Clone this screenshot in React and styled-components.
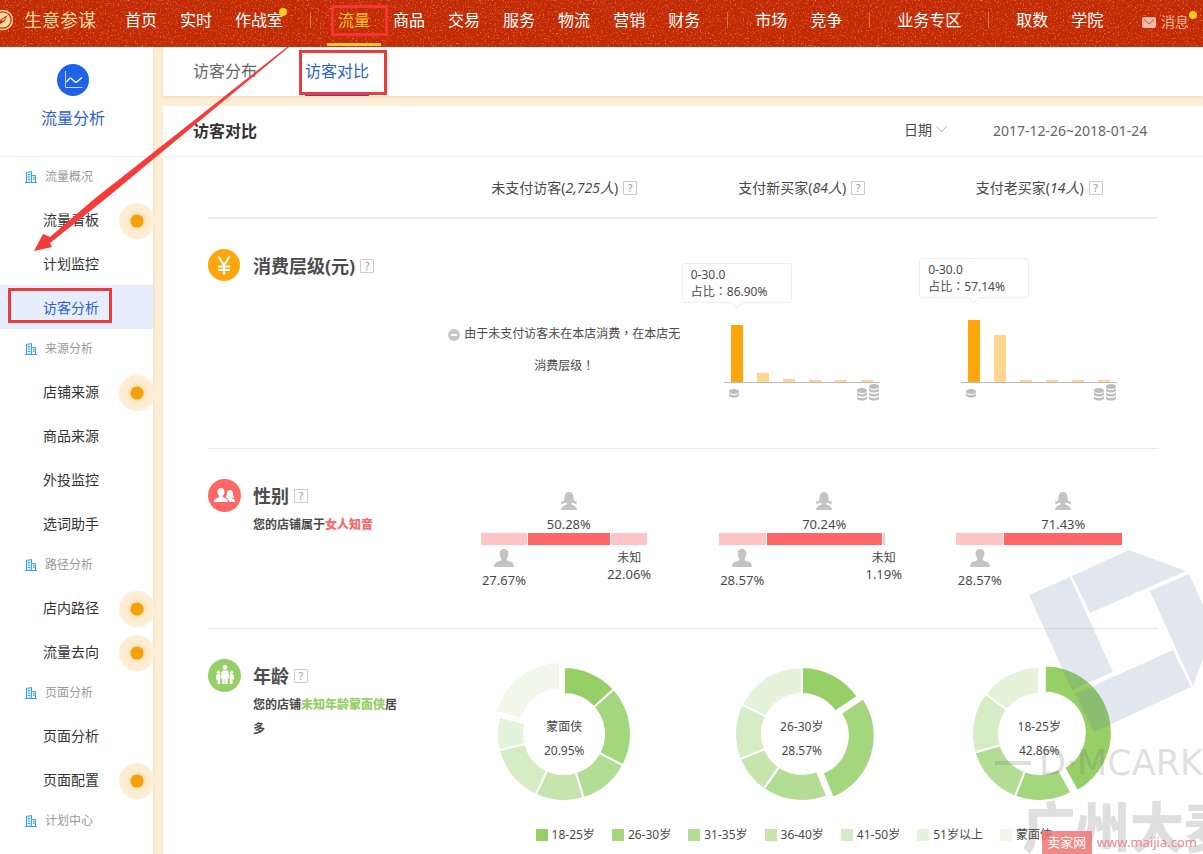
import React from 'react';
import styled, { createGlobalStyle, css } from 'styled-components';

const GlobalStyle = createGlobalStyle`
  *, *::before, *::after { box-sizing: border-box; }
  body {
    margin: 0;
    background: #fdeed7;
    color: #4a4a4a;
    font: 12px/18px "Noto Sans", "Noto Sans CJK SC", sans-serif;
  }
  h1, h2, h3, p, ul { margin: 0; padding: 0; font-weight: normal; }
  ul { list-style: none; }
  a { color: inherit; text-decoration: none; }
  button { font: inherit; color: inherit; border: 0; background: none; padding: 0; }
  svg { display: block; flex: none; }
`;

const Page = styled.div`
  position: relative;
  min-height: 100vh;
  overflow: hidden;
`;

/* ---------- top bar ---------- */

const TopBar = styled.header`
  position: relative;
  display: flex;
  align-items: flex-start;
  height: 47px;
  background: #c12a03;
  color: #fff;
  white-space: nowrap;
`;

const Grain = styled.svg`
  position: absolute;
  inset: 0;
  width: 100%;
  height: 100%;
`;

const Brand = styled.a`
  position: relative;
  display: flex;
  align-items: center;
  gap: 11px;
  width: 125px;
  height: 40px;
  flex: none;
  color: #fcd7a0;
  font-size: 18px;
`;

const MainNav = styled.nav`
  position: relative;
  display: flex;
  gap: 27px;
  flex: 1;
`;

const NavGroup = styled.div`
  display: flex;
  gap: 23px;

  & + & {
    padding-left: 28px;
    background: linear-gradient(#d9705a, #d9705a) 0 12px / 1px 16px no-repeat;
  }
`;

const NavLink = styled.a`
  position: relative;
  height: 47px;
  font-size: 16px;
  line-height: 40px;
  ${(p) => p.$active && css`
    color: #fbc02d;
    &::after {
      content: '';
      position: absolute;
      left: -11px;
      right: -11px;
      bottom: 1px;
      height: 3px;
      background: #f9c32f;
    }
  `}
`;

const Dot = styled.i`
  position: absolute;
  top: 8px;
  right: -4px;
  width: 8px;
  height: 8px;
  border-radius: 50%;
  background: #fccb20;
`;

const Messages = styled.a`
  position: relative;
  display: flex;
  align-items: center;
  gap: 5px;
  margin-right: 14px;
  padding-top: 2px;
  font-size: 14px;
  line-height: 40px;
  color: #f3b5a5;

  ${Dot} { top: 11px; right: -8px; }
`;

/* ---------- annotations ---------- */

const Mark = styled.span`
  position: absolute;
  border: 3px solid #ec3b3b;
  pointer-events: none;
  z-index: 3;
  ${(p) => p.$kind === 'nav' && css`inset: 5px -18px 11px -7px; border-color: #f73434;`}
  ${(p) => p.$kind === 'tab' && css`inset: 3px -18px -2px -6px;`}
  ${(p) => p.$kind === 'side' && css`inset: 3px 41px 6px 8px;`}
`;

const Arrow = styled.svg`
  position: absolute;
  left: 0;
  top: 0;
  z-index: 4;
  pointer-events: none;
`;

/* ---------- layout ---------- */

const Body = styled.div`
  display: grid;
  grid-template-columns: 153px minmax(0, 1fr);
  column-gap: 10px;
  min-height: calc(100vh - 47px);
`;

const Sidebar = styled.aside`
  position: relative;
  background: #fff;
  box-shadow: 1px 2px 3px #f1dfbf;
`;

const Main = styled.main`
  display: flex;
  flex-direction: column;
  gap: 10px;
  min-width: 0;
`;

const SideHead = styled.div`
  display: flex;
  flex-direction: column;
  align-items: center;
  gap: 10px;
  height: 110px;
  padding: 17px 7px 0 0;
  border-bottom: 1px solid #eee;
  color: #2c5fd0;
  font-size: 16px;
  line-height: 24px;
`;

const SideGroup = styled.h3`
  display: flex;
  align-items: center;
  gap: 8px;
  height: 40px;
  padding-left: 25px;
  color: #999;
  font-size: 12px;
`;

const SideItem = styled.a`
  position: relative;
  display: block;
  height: 44px;
  padding-left: 43px;
  font-size: 14px;
  line-height: 46px;
  color: ${(p) => (p.$active ? '#2c5fd0' : '#333')};
  background: ${(p) => (p.$active ? '#e6eefd' : 'none')};
`;

const Hot = styled.i`
  position: absolute;
  right: -2px;
  top: 6px;
  width: 36px;
  height: 36px;
  border-radius: 50%;
  background: radial-gradient(circle, #f2a206 0 6px, #f6dfb4 7px, #fbebcf 10px, #fdefd7 18px);
`;

const Tabs = styled.nav`
  display: flex;
  gap: 48px;
  height: 49px;
  padding-left: 30px;
  background: #fff;
  box-shadow: 0 1px 4px #ecd9b8;
`;

const Tab = styled.a`
  position: relative;
  font-size: 16px;
  line-height: 48px;
  color: ${(p) => (p.$active ? '#2c5fd0' : '#666')};
  border-bottom: 3px solid ${(p) => (p.$active ? '#5a3fc0' : 'transparent')};
`;

const Panel = styled.section`
  flex: 1;
  background: #fff;
`;

const PanelHead = styled.div`
  display: flex;
  align-items: center;
  height: 51px;
  padding: 0 52px 0 30px;
  border-bottom: 1px solid #eee;
`;

const PanelTitle = styled.h1`
  flex: 1;
  color: #333;
  font-size: 16px;
  font-weight: bold;
`;

const DateButton = styled.button`
  display: flex;
  align-items: center;
  gap: 4px;
  margin-right: 46px;
  padding-bottom: 3px;
  font-size: 14px;
`;

const DateRange = styled.span`
  width: 158px;
  font-size: 14px;
  color: #666;
`;

const Content = styled.div`
  padding: 0 45px;
`;

const Row = styled.div`
  display: grid;
  grid-template-columns: repeat(4, minmax(0, 1fr));
`;

const ColumnHeads = styled(Row)`
  height: 62px;
  padding-top: 2px;
  border-bottom: 2px solid #eee;
`;

const ColumnHead = styled.h2`
  display: flex;
  align-items: center;
  justify-content: center;
  gap: 5px;
  font-size: 14px;
`;

const HelpBox = styled.button`
  width: 14px;
  height: 14px;
  border: 1px solid #ccc;
  border-radius: 1px;
  color: #999;
  font-size: 11px;
  font-weight: normal;
  line-height: 12px;
  text-align: center;
`;

const Section = styled(Row)`
  padding: 30px 0 ${(p) => p.$bottom}px;
  border-bottom: ${(p) => (p.$last ? '0' : '1px solid #e8e8e8')};
`;

const Intro = styled.div`
  display: flex;
  align-items: flex-start;
  gap: 12px;
`;

const IntroTitle = styled.h2`
  display: flex;
  align-items: center;
  gap: 5px;
  color: #4d4d4d;
  font-size: 18px;
  font-weight: bold;
  line-height: 34px;
  white-space: nowrap;
`;

const IntroText = styled.p`
  width: 146px;
  line-height: 24px;
  font-weight: bold;

  b { color: ${(p) => p.$color}; }
`;

/* ---------- spending level ---------- */

const EmptyNote = styled.p`
  margin-top: 69px;
  font-family: "Noto Sans", "Noto Sans CJK TC", sans-serif;
  line-height: 32px;
  text-align: center;
  white-space: nowrap;

  svg {
    display: inline-block;
    margin-right: 4px;
    vertical-align: -3px;
  }
`;

const BarChart = styled.div`
  width: 156px;
  margin: 0 auto;
`;

const Bars = styled.div`
  display: grid;
  grid-template-columns: repeat(6, 1fr);
  align-items: end;
  justify-items: center;
  height: 134px;
  border-bottom: 1px solid #bbb;
`;

const Bar = styled.div`
  position: relative;
  width: 12px;
  background: ${(p) => (p.$strong ? '#ffa60c' : '#ffd68f')};
`;

const Tooltip = styled.div`
  position: absolute;
  left: -49px;
  bottom: calc(100% + 22px);
  width: 110px;
  padding: 2px 8px;
  border: 1px solid #eee;
  border-radius: 3px;
  background: #fff;
  font-family: "Noto Sans", "Noto Sans CJK TC", sans-serif;
  line-height: 17px;
  white-space: nowrap;

  &::after {
    content: '';
    position: absolute;
    left: 50px;
    bottom: -5px;
    width: 8px;
    height: 8px;
    border: solid #eee;
    border-width: 0 1px 1px 0;
    background: #fff;
    transform: rotate(45deg);
  }
`;

const CoinRow = styled.div`
  display: flex;
  justify-content: space-between;
  padding: 1px 0 0 5px;
  height: 19px;
`;

/* ---------- gender ---------- */

const GenderChart = styled.div`
  display: grid;
  grid-template-rows: 54px 12px auto;
  column-gap: 1px;
  width: 166px;
  margin: 0 auto;
  font-size: 13px;
  white-space: nowrap;
`;

const SegLabel = styled.div`
  display: flex;
  flex-direction: column;
  align-items: center;
  justify-self: center;
  gap: ${(p) => (p.$above ? 5 : 4)}px;
  width: 60px;
  margin: ${(p) => (p.$above ? '13px -30px 0' : '4px -30px 0')};
  grid-row: ${(p) => (p.$above ? 1 : 3)};
  grid-column: ${(p) => p.$column};
`;

const UnknownLabel = styled(SegLabel)`
  gap: 0;
  line-height: 17px;

  span { font-size: 12px; }
`;

const Segment = styled.div`
  grid-row: 2;
  grid-column: ${(p) => p.$column};
  background: ${(p) => (p.$strong ? '#ff6767' : '#ffc4c5')};
`;

/* ---------- age ---------- */

const DonutBox = styled.div`
  display: grid;
  place-items: center;

  > * { grid-area: 1 / 1; }
`;

const DonutText = styled.p`
  padding-top: 10px;
  line-height: 24px;
  text-align: center;
`;

const Legend = styled.ul`
  grid-column: 2 / -1;
  display: flex;
  justify-content: center;
  gap: 17px;
  margin-top: 16px;
  padding-right: 16px;
  line-height: 20px;
  white-space: nowrap;
`;

const LegendItem = styled.li`
  display: flex;
  align-items: center;
  gap: 4px;

  &::before {
    content: '';
    width: 12px;
    height: 12px;
    background: ${(p) => p.$color};
  }
`;

/* ---------- stamps over the page ---------- */

const Stamp = styled.div`
  position: absolute;
  left: calc(100% - 208px);
  top: 548px;
  width: 300px;
  color: rgba(110, 110, 110, 0.22);
  white-space: nowrap;
  pointer-events: none;
  z-index: 2;
`;

const StampLatin = styled.div`
  display: flex;
  align-items: center;
  gap: 8px;
  font: 35px/40px "DejaVu Sans", sans-serif;

  &::before {
    content: '';
    width: 36px;
    height: 4px;
    background: currentColor;
  }
`;

const StampHan = styled.div`
  padding-left: 27px;
  font: 900 54px/84px "Noto Sans CJK SC", sans-serif;
`;

const SiteTag = styled.a`
  position: absolute;
  right: 6px;
  top: 831px;
  display: flex;
  align-items: center;
  gap: 5px;
  color: #ea8a8a;
  font-size: 13px;
  line-height: 23px;
  z-index: 3;

  b {
    width: 50px;
    background: rgba(240, 115, 115, 0.85);
    color: #fff;
    font-weight: normal;
    text-align: center;
  }
`;

/* ---------- drawings ---------- */

const LogoIcon = () => (
  <svg width="13" height="22" viewBox="0 0 13 22" fill="none" aria-hidden="true">
    <circle cx="3" cy="11" r="9.5" stroke="#fcd7a0" strokeWidth="1.5" />
    <circle cx="3" cy="11" r="7.5" fill="#fcd7a0" />
    <path d="M7.500 6 4.500 12.500-2 16 1 10Z" fill="#c12a03" />
    <path d="M6 8 3 12.500 1.500 11Z" fill="#fcd7a0" />
  </svg>
);

const MailIcon = () => (
  <svg width="14" height="11" viewBox="0 0 14 11" aria-hidden="true">
    <rect width="14" height="11" rx="2" fill="#f3b9ab" />
    <path d="m2 2.500 5 4.500 5-4.500" fill="none" stroke="#d0583c" />
  </svg>
);

const FlowIcon = () => (
  <svg width="32" height="32" viewBox="0 0 32 32" fill="none" stroke="#fff" aria-hidden="true">
    <circle cx="16" cy="16" r="16" fill="#1f62e6" stroke="none" />
    <path d="M8.500 7v16.500H25.500" stroke="#c9dafb" />
    <path d="m9.500 18 2.500-3c1-1.200 2-1.200 3 0l2.500 2.500c1 1 1.800 1 2.800 0L25 13.500" strokeWidth="1.300" />
  </svg>
);

const BuildingIcon = () => (
  <svg width="12" height="12" viewBox="0 0 12 12" fill="none" stroke="#3d9ff0" aria-hidden="true">
    <path d="M1.500 11V1.500L6.500.5V11M6.500 4.500h4V11" fill="#d6ecfd" />
    <path d="M0 11.500h12M3 3.500h2M3 6h2M3 8.500h2M8 6.500h1.500M8 8.500h1.500" />
  </svg>
);

const ChevronIcon = () => (
  <svg width="11" height="7" viewBox="0 0 11 7" fill="none" stroke="#aaa" aria-hidden="true">
    <path d="m.5.5 5 5.500 5-5.500" />
  </svg>
);

const YuanIcon = () => (
  <svg width="33" height="33" viewBox="0 0 33 33" aria-hidden="true">
    <circle cx="16" cy="16" r="16" fill="#ffa60c" />
    <path d="m10.500 7.500 5.500 9 5.500-9M16 15.500V25.500M10 17.500h12M10 21h12" fill="none" stroke="#fff" strokeWidth="2.200" />
  </svg>
);

const PeopleIcon = () => (
  <svg width="33" height="33" viewBox="0 0 33 33" aria-hidden="true">
    <circle cx="16.500" cy="16.500" r="16.500" fill="#ff6767" />
    <g fill="#fff">
      <path d="M9.500 13c0-2.700 1.300-4 3.500-4s3.500 1.300 3.500 4c0 1.700-.7 2.800-1.500 3.600v1.600c1 .8 4 1.200 4.500 2.600.3.800.3 1.500.3 2.200H6c0-.7 0-1.400.4-2.200.6-1.400 3.600-1.800 4.600-2.600v-1.600c-.8-.8-1.500-1.900-1.500-3.600Z" />
      <path d="M18.500 18.800c-.6-.2-.9-.4-1-.8 1-.3 1.300-1.200 1.400-3 .1-2.700 1-4 3.100-4s3 1.300 3.100 4c.1 1.800.4 2.700 1.400 3-.4.800-1.500 1-2.500.8v.5c1.500.6 3 1 3.300 3.700h-6c-.2-2-1.200-3.200-2.800-4.200Z" />
    </g>
  </svg>
);

const FamilyIcon = () => (
  <svg width="33" height="33" viewBox="0 0 33 33" aria-hidden="true">
    <circle cx="16.500" cy="16.500" r="16.500" fill="#96cf66" />
    <g fill="#fff">
      <circle cx="17" cy="8.500" r="2.400" />
      <path d="M14.200 11.500h5.600l1.500 5v3h-1.500V25h-2.500v-5h-.6v5h-2.500v-5.500h-1.500v-3Z" />
      <circle cx="10.500" cy="13.200" r="1.700" />
      <circle cx="23.500" cy="13.200" r="1.700" />
      <path d="M8.800 15.300h3.400V25H9.500v-4.500H8v-3.500ZM25.200 15.300h-3.400V25h2.700v-4.500H26v-3.500Z" />
    </g>
  </svg>
);

const MinusIcon = () => (
  <svg width="12" height="12" viewBox="0 0 12 12" aria-hidden="true">
    <circle cx="6" cy="6" r="6" fill="#c8c8c8" />
    <path d="M3 6h6" stroke="#fff" strokeWidth="2" />
  </svg>
);

const FemaleIcon = () => (
  <svg width="20" height="18" viewBox="0 0 20 18" fill="#c4c4c4" aria-hidden="true">
    <path d="M5.500 5.500C5.500 2 7 0 10 0s4.500 2 4.500 5.500c.1 2 .5 3.500 1.500 4 .5-.1 1-.4 1.800-1 .1 1-.1 1.700-.6 2.300.4.500.7.900.8 1.500-1.300 0-2.300-.4-3-1.400-.5.200-1.300.1-1.900-.4l-.6.5v1.800c2 .8 5.100 1.400 5.500 5.200H2c.4-3.800 3.500-4.400 5.500-5.200V11l-.6-.5c-.6.5-1.400.6-1.900.4-.7 1-1.700 1.400-3 1.400.1-.6.4-1 .8-1.500-.5-.6-.7-1.300-.6-2.300.8.600 1.300.9 1.800 1 1-.5 1.400-2 1.500-4Z" />
  </svg>
);

const MaleIcon = () => (
  <svg width="20" height="18" viewBox="0 0 20 18" fill="#c4c4c4" aria-hidden="true">
    <path d="M5.600 4.500C5.600 1.500 7 0 10 0s4.400 1.500 4.400 4.500c0 2-.9 4-1.700 4.900v1.800c2.900 1.500 6.600 1.300 7 4.800v2H.3v-2c.4-3.500 4.100-3.300 7-4.800V9.400c-.8-.9-1.700-2.900-1.700-4.900Z" />
  </svg>
);

const Coins = ({ x, top, count }) => (
  <g fill="#bdbdbd">
    <ellipse cx={x} cy={top + 2.5} rx="5" ry="2.500" />
    {Array.from({ length: count - 1 }, (_, i) => (
      <path key={i} d={`M${x - 5} ${top + 4 + i * 4}c1.500 3 8.500 3 10 0v2.400c-1 2.800-9 2.800-10 0Z`} />
    ))}
  </g>
);

const OneCoin = () => (
  <svg width="10" height="18" viewBox="0 0 10 18" aria-hidden="true">
    <Coins x={5} top={5} count={2} />
  </svg>
);

const CoinStacks = () => (
  <svg width="23" height="19" viewBox="0 0 23 19" aria-hidden="true">
    <Coins x={5} top={4} count={3} />
    <Coins x={17} top={0} count={4} />
  </svg>
);

const point = (radius, deg) => {
  const a = (deg * Math.PI) / 180;
  return `${radius * Math.sin(a)} ${-radius * Math.cos(a)}`;
};

const slicePath = (from, to) => {
  const large = to - from > 180 ? 1 : 0;
  return `M${point(67, from)}A67 67 0 ${large} 1 ${point(67, to)}L${point(40, to)}A40 40 0 ${large} 0 ${point(40, from)}Z`;
};

const Donut = ({ slices, label, value }) => (
  <DonutBox>
    <svg width="150" height="150" viewBox="-75 -75 150 150" role="img" aria-label={label + ' ' + value}>
      {slices.map(({ from, to, color, pulled }) => (
        <path
          key={from}
          d={slicePath(from, to)}
          fill={color}
          stroke="#fff"
          strokeWidth="2"
          transform={pulled ? `translate(${point(6, (from + to) / 2)})` : undefined}
        />
      ))}
    </svg>
    <DonutText>
      {label}
      <br />
      {value}
    </DonutText>
  </DonutBox>
);

/* ---------- data ---------- */

const navGroups = [
  [{ label: '首页' }, { label: '实时' }, { label: '作战室', dot: true }],
  [
    { label: '流量', active: true },
    { label: '商品' },
    { label: '交易' },
    { label: '服务' },
    { label: '物流' },
    { label: '营销' },
    { label: '财务' },
  ],
  [{ label: '市场' }, { label: '竞争' }],
  [{ label: '业务专区' }],
  [{ label: '取数' }, { label: '学院' }],
];

const sideGroups = [
  { title: '流量概况', items: [['流量看板', true], ['计划监控'], ['访客分析', false, true]] },
  { title: '来源分析', items: [['店铺来源', true], ['商品来源'], ['外投监控'], ['选词助手']] },
  { title: '路径分析', items: [['店内路径', true], ['流量去向', true]] },
  { title: '页面分析', items: [['页面分析'], ['页面配置', true]] },
  { title: '计划中心', items: [] },
];

const visitorTypes = [
  ['未支付访客', '2,725人'],
  ['支付新买家', '84人'],
  ['支付老买家', '14人'],
];

const spending = [
  { range: '0-30.0', share: '86.90%', bars: [57, 9, 3, 2, 2, 2] },
  { range: '0-30.0', share: '57.14%', bars: [62, 47, 2, 2, 2, 2] },
];

const genders = [
  { male: 27.67, female: 50.28, unknown: 22.06 },
  { male: 28.57, female: 70.24, unknown: 1.19 },
  { male: 28.57, female: 71.43 },
];

const ages = [
  ['18-25岁', '#96cf66'],
  ['26-30岁', '#a4d67e'],
  ['31-35岁', '#b3dd94'],
  ['36-40岁', '#c6e5ad'],
  ['41-50岁', '#d5ecc4'],
  ['51岁以上', '#e4f3d9'],
  ['蒙面侠', '#f1f8ea'],
];

const makeSlices = (edges, colors, pulledIndex) =>
  edges.slice(1).map((to, i) => ({
    from: edges[i],
    to,
    color: ages[colors[i]][1],
    pulled: i === pulledIndex,
  }));

const donuts = [
  { label: '蒙面侠', value: '20.95%', slices: makeSlices([0, 48, 118, 163, 205, 256, 285, 360], [0, 1, 2, 3, 4, 5, 6], 6) },
  { label: '26-30岁', value: '28.57%', slices: makeSlices([0, 56, 158, 215, 248, 296, 360], [0, 1, 2, 3, 4, 5], 1) },
  { label: '18-25岁', value: '42.86%', slices: makeSlices([0, 151, 201, 254, 307, 360], [0, 1, 2, 4, 5], 0) },
];

const Help = () => <HelpBox type="button" aria-label="说明">?</HelpBox>;

const SpendingChart = ({ range, share, bars }) => (
  <BarChart>
    <Bars>
      {bars.map((height, i) => (
        <Bar key={i} $strong={i === 0} style={{ height }}>
          {i === 0 && (
            <Tooltip>
              {range}
              <br />
              占比：{share}
            </Tooltip>
          )}
        </Bar>
      ))}
    </Bars>
    <CoinRow>
      <OneCoin />
      <CoinStacks />
    </CoinRow>
  </BarChart>
);

const Gender = ({ male, female, unknown }) => (
  <GenderChart
    style={{
      gridTemplateColumns: [male, female, unknown]
        .filter(Boolean)
        .map((n) => `minmax(0, ${n}fr)`)
        .join(' '),
    }}
  >
    <SegLabel $above $column={2}>
      <FemaleIcon />
      {female.toFixed(2)}%
    </SegLabel>
    <Segment $column={1} />
    <Segment $column={2} $strong />
    {unknown && <Segment $column={3} />}
    <SegLabel $column={1}>
      <MaleIcon />
      {male.toFixed(2)}%
    </SegLabel>
    {unknown && (
      <UnknownLabel $column={3}>
        <span>未知</span>
        {unknown.toFixed(2)}%
      </UnknownLabel>
    )}
  </GenderChart>
);

export default function App() {
  return (
    <Page>
      <GlobalStyle />
      <TopBar>
        <Grain aria-hidden="true">
          <filter id="grain" x="0" y="0" width="100%" height="100%">
            <feTurbulence type="fractalNoise" baseFrequency="0.6" numOctaves="2" seed="4" />
            <feColorMatrix values="0 0 0 0 0.9  0 0 0 0 0.4  0 0 0 0 0.22  2 0 0 0 -1.1" />
          </filter>
          <rect width="100%" height="100%" filter="url(#grain)" />
        </Grain>
        <Brand href="#">
          <LogoIcon />
          生意参谋
        </Brand>
        <MainNav>
          {navGroups.map((group, i) => (
            <NavGroup key={i}>
              {group.map(({ label, active, dot }) => (
                <NavLink key={label} href="#" $active={active}>
                  {label}
                  {dot && <Dot />}
                  {active && <Mark $kind="nav" />}
                </NavLink>
              ))}
            </NavGroup>
          ))}
        </MainNav>
        <Messages href="#">
          <MailIcon />
          消息
          <Dot />
        </Messages>
      </TopBar>

      <Body>
        <Sidebar>
          <SideHead>
            <FlowIcon />
            流量分析
          </SideHead>
          {sideGroups.map(({ title, items }) => (
            <nav key={title} aria-label={title}>
              <SideGroup>
                <BuildingIcon />
                {title}
              </SideGroup>
              {items.map(([label, hot, active]) => (
                <SideItem key={label} href="#" $active={active}>
                  {label}
                  {hot && <Hot />}
                  {active && <Mark $kind="side" />}
                </SideItem>
              ))}
            </nav>
          ))}
        </Sidebar>

        <Main>
          <Tabs>
            <Tab href="#">访客分布</Tab>
            <Tab href="#" $active>
              访客对比
              <Mark $kind="tab" />
            </Tab>
          </Tabs>

          <Panel>
            <PanelHead>
              <PanelTitle>访客对比</PanelTitle>
              <DateButton type="button">
                日期
                <ChevronIcon />
              </DateButton>
              <DateRange>2017-12-26~2018-01-24</DateRange>
            </PanelHead>

            <Content>
              <ColumnHeads>
                <span />
                {visitorTypes.map(([name, count]) => (
                  <ColumnHead key={name}>
                    <span>
                      {name}(<em>{count}</em>)
                    </span>
                    <Help />
                  </ColumnHead>
                ))}
              </ColumnHeads>

              <Section $bottom={46}>
                <Intro>
                  <YuanIcon />
                  <IntroTitle>
                    消费层级(元)
                    <Help />
                  </IntroTitle>
                </Intro>
                <EmptyNote>
                  <MinusIcon />
                  由于未支付访客未在本店消费，在本店无
                  <br />
                  消费层级！
                </EmptyNote>
                {spending.map((s) => (
                  <SpendingChart key={s.share} {...s} />
                ))}
              </Section>

              <Section $bottom={39}>
                <Intro>
                  <PeopleIcon />
                  <div>
                    <IntroTitle>
                      性别
                      <Help />
                    </IntroTitle>
                    <IntroText $color="#ff6767">
                      您的店铺属于<b>女人知音</b>
                    </IntroText>
                  </div>
                </Intro>
                {genders.map((g) => (
                  <Gender key={g.female} {...g} />
                ))}
              </Section>

              <Section $bottom={10} $last>
                <Intro>
                  <FamilyIcon />
                  <div>
                    <IntroTitle>
                      年龄
                      <Help />
                    </IntroTitle>
                    <IntroText $color="#96cf66">
                      您的店铺<b>未知年龄蒙面侠</b>居多
                    </IntroText>
                  </div>
                </Intro>
                {donuts.map((d) => (
                  <Donut key={d.label} {...d} />
                ))}
                <Legend>
                  {ages.map(([label, color]) => (
                    <LegendItem key={label} $color={color}>
                      {label}
                    </LegendItem>
                  ))}
                </Legend>
              </Section>
            </Content>
          </Panel>
        </Main>
      </Body>

      <Stamp>
        <svg width="300" height="195" viewBox="0 0 300 195" fill="rgba(75, 115, 155, 0.170)" aria-hidden="true">
          <path d="M75 29 34 47 77 142 118 124Z" />
          <path d="m77 28 57-26 57 21-96 42Z" />
          <path d="m155 43 39-17 25 55-21 57Z" />
          <path d="m178 102 18 37-97 45-19-38Z" />
        </svg>
        <StampLatin>D·MCARK</StampLatin>
        <StampHan>广州大麦</StampHan>
      </Stamp>
      <SiteTag href="#">
        <b>卖家网</b>
        www.maijia.com
      </SiteTag>

      <Arrow width="300" height="260" viewBox="0 0 300 260" fill="#f83a3a" aria-hidden="true">
        <path d="M287 47 93 200 50 237 43 234 34 251 52 247 50 243 104 200 289 47Z" />
      </Arrow>
    </Page>
  );
}
